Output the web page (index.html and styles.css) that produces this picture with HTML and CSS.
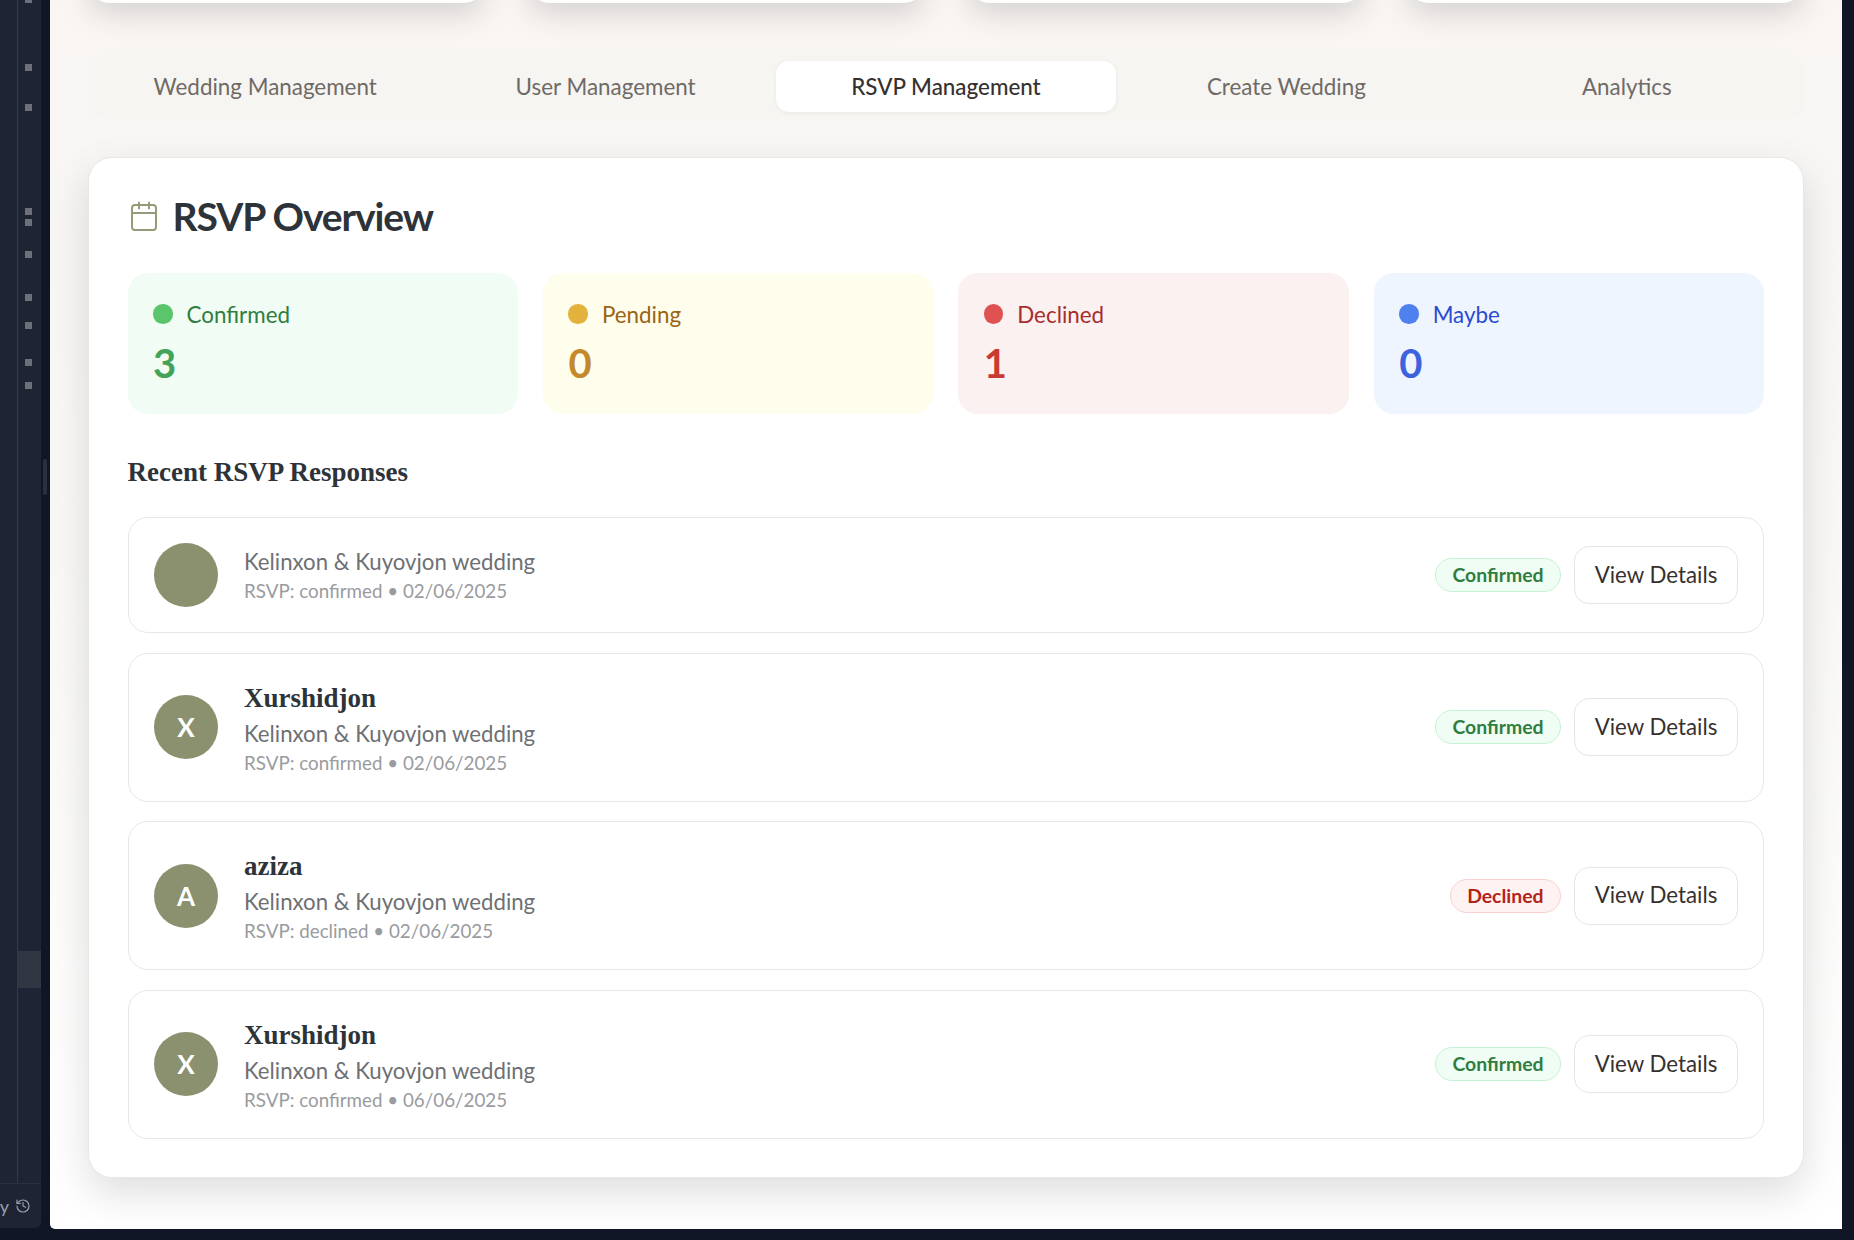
FILE: index.html
```html
<!DOCTYPE html>
<html lang="en">
<head>
    <meta charset="UTF-8">
    <meta name="viewport" content="width=device-width, initial-scale=1.0">
    <title>RSVP Management</title>
    <link rel="stylesheet" href="styles.css">
</head>
<body>
    <aside class="side-panel">
        <div class="side-strip">
            <svg class="minimap" width="41" height="1183" viewBox="0 0 41 1183">
                <rect x="17" y="0" width="1" height="1183" fill="#343a49"/>
                <rect x="18" y="951" width="23" height="37" fill="#323642"/>
                <g fill="#6d7079">
                    <rect x="25" y="-3" width="7" height="6"/>
                    <rect x="25" y="64" width="7" height="7"/>
                    <rect x="25" y="104" width="7" height="7"/>
                    <rect x="25" y="208" width="7" height="7"/>
                    <rect x="25" y="219" width="7" height="7"/>
                    <rect x="25" y="251" width="7" height="7"/>
                    <rect x="25" y="294" width="7" height="7"/>
                    <rect x="25" y="322" width="7" height="7"/>
                    <rect x="25" y="359" width="7" height="7"/>
                    <rect x="25" y="382" width="7" height="7"/>
                </g>
            </svg>
            <div class="side-status">
                <span>y</span>
                <svg width="16" height="16" viewBox="0 0 24 24" fill="none" stroke="#9aa0ab" stroke-width="1.8" stroke-linecap="round" stroke-linejoin="round">
                    <path d="M3 12a9 9 0 1 0 9-9 9.75 9.75 0 0 0-6.74 2.74L3 8"/>
                    <path d="M3 3v5h5"/>
                    <path d="M12 7v5l4 2"/>
                </svg>
            </div>
        </div>
        <div class="side-handle"></div>
    </aside>

    <main class="main">
        <div class="top-cards">
            <div class="top-card"></div>
            <div class="top-card"></div>
            <div class="top-card"></div>
            <div class="top-card"></div>
        </div>

        <nav class="tabs">
            <div class="tab">Wedding Management</div>
            <div class="tab">User Management</div>
            <div class="tab active">RSVP Management</div>
            <div class="tab">Create Wedding</div>
            <div class="tab">Analytics</div>
        </nav>

        <section class="panel">
            <h2 class="panel-title">
                <svg class="panel-icon" width="28" height="30" viewBox="0 0 28 30" fill="none" stroke="#959b78" stroke-width="2" stroke-linecap="round">
                    <rect x="2" y="4" width="24" height="25" rx="3"/>
                    <path d="M2 12h24"/>
                    <path d="M9 1.5v6"/>
                    <path d="M19 1.5v6"/>
                </svg>
                RSVP Overview
            </h2>

            <div class="stats">
                <div class="stat confirmed">
                    <div class="stat-label"><span class="dot"></span>Confirmed</div>
                    <div class="stat-value">3</div>
                </div>
                <div class="stat pending">
                    <div class="stat-label"><span class="dot"></span>Pending</div>
                    <div class="stat-value">0</div>
                </div>
                <div class="stat declined">
                    <div class="stat-label"><span class="dot"></span>Declined</div>
                    <div class="stat-value">1</div>
                </div>
                <div class="stat maybe">
                    <div class="stat-label"><span class="dot"></span>Maybe</div>
                    <div class="stat-value">0</div>
                </div>
            </div>

            <h3 class="recent-title">Recent RSVP Responses</h3>

            <div class="responses">
                <div class="response">
                    <div class="avatar"></div>
                    <div class="response-info">
                        <div class="wedding">Kelinxon &amp; Kuyovjon wedding</div>
                        <div class="meta">RSVP: confirmed • 02/06/2025</div>
                    </div>
                    <span class="badge badge-confirmed">Confirmed</span>
                    <button class="details-btn">View Details</button>
                </div>
                <div class="response">
                    <div class="avatar">X</div>
                    <div class="response-info">
                        <div class="name">Xurshidjon</div>
                        <div class="wedding">Kelinxon &amp; Kuyovjon wedding</div>
                        <div class="meta">RSVP: confirmed • 02/06/2025</div>
                    </div>
                    <span class="badge badge-confirmed">Confirmed</span>
                    <button class="details-btn">View Details</button>
                </div>
                <div class="response">
                    <div class="avatar">A</div>
                    <div class="response-info">
                        <div class="name">aziza</div>
                        <div class="wedding">Kelinxon &amp; Kuyovjon wedding</div>
                        <div class="meta">RSVP: declined • 02/06/2025</div>
                    </div>
                    <span class="badge badge-declined">Declined</span>
                    <button class="details-btn">View Details</button>
                </div>
                <div class="response">
                    <div class="avatar">X</div>
                    <div class="response-info">
                        <div class="name">Xurshidjon</div>
                        <div class="wedding">Kelinxon &amp; Kuyovjon wedding</div>
                        <div class="meta">RSVP: confirmed • 06/06/2025</div>
                    </div>
                    <span class="badge badge-confirmed">Confirmed</span>
                    <button class="details-btn">View Details</button>
                </div>
            </div>
        </section>
    </main>
</body>
</html>
```

FILE: styles.css
```css
* {
    box-sizing: border-box;
}
html, body {
    margin: 0;
    height: 1240px;
    overflow: hidden;
}
body {
    display: flex;
    background: #101626;
    font-family: Lato, "Open Sans", sans-serif;
    color: #2d3339;
}

/* editor strip on the left */
.side-panel {
    display: flex;
    width: 50px;
    height: 1228px;
    flex-shrink: 0;
}
.side-strip {
    display: flex;
    flex-direction: column;
    width: 41px;
    background: #1e2433;
    border-bottom-right-radius: 6px;
    overflow: hidden;
}
.minimap {
    display: block;
    flex-shrink: 0;
}
.side-status {
    display: flex;
    justify-content: flex-end;
    align-items: center;
    gap: 6px;
    height: 45px;
    padding: 0 10px 0 0;
    border-top: 1px solid #2a3040;
    color: #9aa0ab;
    font-size: 18px;
}
.side-status svg {
    flex-shrink: 0;
}
.side-handle {
    width: 4px;
    height: 36px;
    margin: 459px 0 0 2px;
    border-radius: 2px;
    background: #2a303e;
}

.main {
    flex: 1;
    height: 1229px;
    margin-right: 12px;
    padding: 0 38px;
    overflow: hidden;
    border-bottom-left-radius: 5px;
    background: linear-gradient(180deg, #f8f5f3 0%, #f9f8f6 45%, #ffffff 100%);
}

.top-cards {
    display: grid;
    grid-template-columns: repeat(4, 1fr);
    gap: 43px;
    height: 43px;
    margin-top: -40px;
}
.top-card {
    background: #fff;
    border-radius: 24px;
    box-shadow: 0 10px 30px rgba(0,0,0,0.15);
}

.tabs {
    display: grid;
    grid-template-columns: repeat(5, 1fr);
    height: 63px;
    margin-top: 52px;
    padding: 6px 7px;
    border-radius: 16px;
    background: #f6f5f2;
}
.tab {
    display: flex;
    align-items: center;
    justify-content: center;
    border-radius: 13px;
    color: #6f6a66;
    font-size: 22.4px;
}
.tab.active {
    background: #fff;
    color: #36312e;
    font-weight: 500;
    box-shadow: 0 1px 4px rgba(0,0,0,0.06);
}

.panel {
    margin-top: 39px;
    height: 1021px;
    padding: 39px 39px 39px 38.5px;
    background: #fff;
    border: 1px solid #e9e7e4;
    border-radius: 24px;
    box-shadow: 0 16px 40px rgba(0,0,0,0.13);
}
.panel-title {
    display: flex;
    align-items: center;
    gap: 15px;
    height: 38px;
    margin: 0 0 38px;
    padding-left: 2px;
    font-size: 39px;
    font-weight: 700;
    letter-spacing: -1.1px;
    color: #2d3339;
}

.stats {
    display: grid;
    grid-template-columns: repeat(4, 1fr);
    gap: 25px;
}
.stat {
    height: 141px;
    padding: 25px 25.5px;
    border-radius: 20px;
}
.stat-label {
    display: flex;
    align-items: center;
    gap: 14px;
    height: 32px;
    font-size: 22.4px;
}
.dot {
    width: 19.5px;
    height: 19.5px;
    border-radius: 50%;
}
.stat-value {
    margin-top: 8px;
    font-size: 40px;
    font-weight: 700;
    line-height: 50px;
}
.confirmed { background: #f1fcf4; }
.confirmed .stat-label { color: #2f7d3f; }
.confirmed .dot { background: #5bc56b; }
.confirmed .stat-value { color: #43a356; }
.pending { background: #fffdeb; }
.pending .stat-label { color: #9a6414; }
.pending .dot { background: #e3b23c; }
.pending .stat-value { color: #c4892a; }
.declined { background: #fcf1f1; }
.declined .stat-label { color: #a82e2e; }
.declined .dot { background: #e05252; }
.declined .stat-value { color: #c93a33; }
.maybe { background: #eff5fe; }
.maybe .stat-label { color: #2a4bd0; }
.maybe .dot { background: #4f81ee; }
.maybe .stat-value { color: #3c63dd; }

.recent-title {
    height: 36px;
    margin: 41px 0 26px;
    font-family: "Liberation Serif", serif;
    font-size: 27px;
    font-weight: 700;
    line-height: 35px;
    color: #2d3339;
}

.responses {
    display: flex;
    flex-direction: column;
    gap: 19.5px;
}
.response {
    display: flex;
    align-items: center;
    padding: 25px;
    background: #fff;
    border: 1px solid #e8e7e5;
    border-radius: 20px;
}
.avatar {
    display: flex;
    align-items: center;
    justify-content: center;
    width: 64px;
    height: 64px;
    flex-shrink: 0;
    padding-left: 1px;
    border-radius: 50%;
    background: #8b916f;
    color: #fff;
    font-size: 26px;
    font-weight: 700;
}
.response-info {
    flex: 1;
    margin-left: 26.5px;
    padding-bottom: 1px;
}
.name {
    font-family: "Liberation Serif", serif;
    font-size: 27px;
    font-weight: 700;
    line-height: 39px;
    color: #2d3339;
}
.wedding {
    font-size: 22.2px;
    line-height: 32px;
    color: #6e7074;
}
.meta {
    font-size: 18.8px;
    line-height: 25px;
    color: #9a9b9e;
}
.badge {
    padding: 0 16.5px;
    height: 34px;
    border-radius: 17px;
    font-size: 19.4px;
    font-weight: 700;
    line-height: 32px;
}
.badge-confirmed {
    background: #f0fdf4;
    border: 1px solid #c5f2d2;
    color: #2f7d3f;
}
.badge-declined {
    background: #fef2f2;
    border: 1px solid #fad0d0;
    color: #b42318;
}
.details-btn {
    width: 164px;
    height: 58px;
    margin-left: 13px;
    padding: 0 0 2px;
    background: #fff;
    border: 1px solid #e6e5e3;
    border-radius: 15px;
    color: #36312e;
    font-family: inherit;
    font-size: 22.3px;
    cursor: pointer;
}
```
